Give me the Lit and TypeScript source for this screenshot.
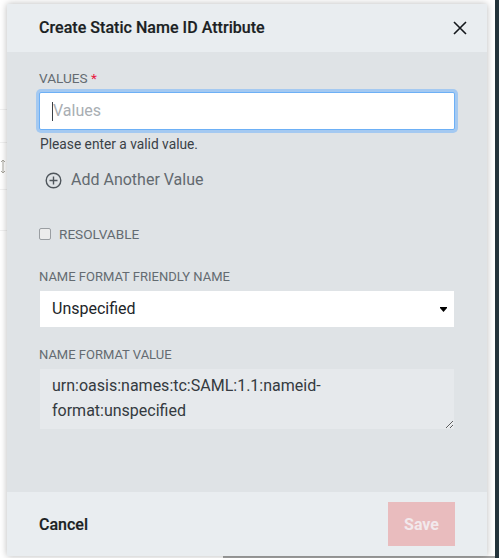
import { LitElement, html, css } from "lit";
import { customElement } from "lit/decorators.js";

@customElement("app-root")
export class AppRoot extends LitElement {
  static styles = css`
    :host {
      display: block;
      position: relative;
      width: 499px;
      height: 558px;
      overflow: hidden;
      background: #fff;
      font-family: Roboto, "Liberation Sans", sans-serif;
      color: #212529;
    }
    * { box-sizing: border-box; }
    .strip {
      position: absolute;
      top: 0;
      right: 0;
      width: 4px;
      height: 100%;
      background: #24343b;
    }
    .bottom {
      position: absolute;
      left: 223px;
      right: 4px;
      bottom: 0;
      height: 2px;
      background: #a6a6a6;
    }
    .line {
      position: absolute;
      left: 0;
      width: 7px;
      height: 1px;
      background: #f1f1f1;
    }
    .l1 { top: 109px; }
    .l2 { top: 142px; }
    .l3 { top: 189px; }
    .l4 { top: 230px; }
    .cursor {
      position: absolute;
      left: 0;
      top: 159px;
      width: 6px;
      height: 15px;
    }
    .page {
      padding: 4px 0 0 7px;
    }
    .dialog {
      position: relative;
      width: 480px;
      height: 552px;
      display: flex;
      flex-direction: column;
      background: #dfe3e6;
      box-shadow: 0 0 7px rgba(0, 0, 0, 0.28);
    }
    header {
      height: 48px;
      flex: none;
      display: flex;
      align-items: center;
      justify-content: space-between;
      padding: 0 19px 0 32px;
      background: #e9edf0;
    }
    h1 {
      margin: 0;
      font-size: 16px;
      line-height: 24px;
      font-weight: 500;
      letter-spacing: 0.04px;
      -webkit-text-stroke: 0.2px #1b1f23;
      color: #1b1f23;
    }
    .close {
      display: block;
      width: 16px;
      height: 16px;
    }
    .body {
      flex: 1;
      display: flex;
      flex-direction: column;
      padding: 18px 33px 0 32px;
    }
    label {
      display: block;
      font-size: 13px;
      line-height: 16px;
      color: #646b71;
    }
    .wide { font-size: 13.6px; }
    .req { color: #e8173f; }
    .input-wrap {
      position: relative;
      margin: 6px 0 0 0;
    }
    input[type="text"] {
      display: block;
      width: 416px;
      height: 38px;
      padding: 0 12px 2px 13px;
      border: 1px solid #6db0f6;
      border-radius: 2px;
      outline: none;
      box-shadow: 0 0 0 3px #a4c9f1;
      background: #fff;
      font: 16px Roboto, sans-serif;
      color: #212529;
    }
    input::placeholder { color: #a9aeb3; opacity: 1; }
    .caret {
      position: absolute;
      left: 13px;
      top: 10px;
      width: 1px;
      height: 19px;
      background: #3a4046;
    }
    .help {
      margin: 5px 0 0 1px;
      font-size: 13.75px;
      line-height: 18px;
      color: #3a4147;
    }
    .add {
      display: flex;
      align-items: center;
      gap: 9px;
      margin: 15px 0 0 6px;
      font-size: 16px;
      line-height: 24px;
      color: #636a70;
    }
    .add svg { display: block; width: 17px; height: 17px; }
    .check {
      display: flex;
      align-items: center;
      gap: 8px;
      margin-top: 32px;
      height: 20px;
    }
    .box {
      width: 12px;
      height: 12px;
      flex: none;
      border: 1px solid #9a9ea2;
      border-radius: 2px;
      background: #ececec;
    }
    .check span { font-size: 13.6px; line-height: 16px; color: #646b71; }
    .second { margin-top: 25px; }
    .select-wrap {
      position: relative;
      margin: 6px 0 0 1px;
    }
    select {
      display: block;
      appearance: none;
      -webkit-appearance: none;
      width: 414px;
      height: 36px;
      padding: 0 12px 2px;
      border: none;
      border-radius: 0;
      outline: none;
      background: #fff;
      font: 16px Roboto, sans-serif;
      color: #212529;
    }
    .arrow {
      position: absolute;
      right: 7px;
      top: 16px;
      width: 7px;
      height: 5px;
      pointer-events: none;
    }
    .third { margin-top: 20px; }
    textarea {
      display: block;
      width: 414px;
      height: 60px;
      margin: 6px 0 0 1px;
      padding: 5px 12px;
      border: none;
      border-radius: 0;
      outline: none;
      background: #e6e9ec;
      font: 16px/24.6px Roboto, sans-serif;
      color: #343a40;
    }
    footer {
      height: 64px;
      flex: none;
      display: flex;
      align-items: center;
      justify-content: space-between;
      padding: 0 32px;
      background: #e9edf0;
    }
    .cancel {
      padding: 0;
      border: none;
      background: none;
      font: 500 16px Roboto, sans-serif;
      -webkit-text-stroke: 0.2px #1b1f23;
      color: #1b1f23;
    }
    .save {
      width: 67px;
      height: 44px;
      border: none;
      background: #e9bcbe;
      font: 700 16px Roboto, sans-serif;
      color: #f2e9ec;
    }
  `;

  render() {
    return html`
      <div class="line l1"></div>
      <div class="line l2"></div>
      <div class="line l3"></div>
      <div class="line l4"></div>
      <svg class="cursor" viewBox="0 0 6 15" fill="none" stroke="#a9a79f" stroke-width="1">
        <path d="M3 1v13M1 3l2-2 2 2M1 12l2 2 2-2" />
      </svg>
      <div class="strip"></div>
      <div class="bottom"></div>
      <div class="page">
        <div class="dialog">
          <header>
            <h1>Create Static Name ID Attribute</h1>
            <svg class="close" viewBox="0 0 16 16" fill="none" stroke="#14181c" stroke-width="1.6">
              <path d="M2 2l12 12M14 2L2 14" />
            </svg>
          </header>
          <div class="body">
            <label class="wide">VALUES <span class="req">*</span></label>
            <div class="input-wrap">
              <input type="text" placeholder="Values" />
              <div class="caret"></div>
            </div>
            <div class="help">Please enter a valid value.</div>
            <div class="add">
              <svg viewBox="0 0 17 17" fill="none" stroke="#4e555b" stroke-width="1.4">
                <circle cx="8.5" cy="8.5" r="7.3" />
                <path d="M8.5 4.5v8M4.5 8.5h8" />
              </svg>
              <span>Add Another Value</span>
            </div>
            <div class="check">
              <div class="box"></div>
              <span>RESOLVABLE</span>
            </div>
            <label class="second">NAME FORMAT FRIENDLY NAME</label>
            <div class="select-wrap">
              <select>
                <option>Unspecified</option>
              </select>
              <svg class="arrow" viewBox="0 0 7 5" fill="#000">
                <path d="M0 0h7v1L3.5 5 0 1z" />
              </svg>
            </div>
            <label class="third">NAME FORMAT VALUE</label>
            <textarea .value=${"urn:oasis:names:tc:SAML:1.1:nameid-format:unspecified"}></textarea>
          </div>
          <footer>
            <button class="cancel">Cancel</button>
            <button class="save">Save</button>
          </footer>
        </div>
      </div>
    `;
  }
}
